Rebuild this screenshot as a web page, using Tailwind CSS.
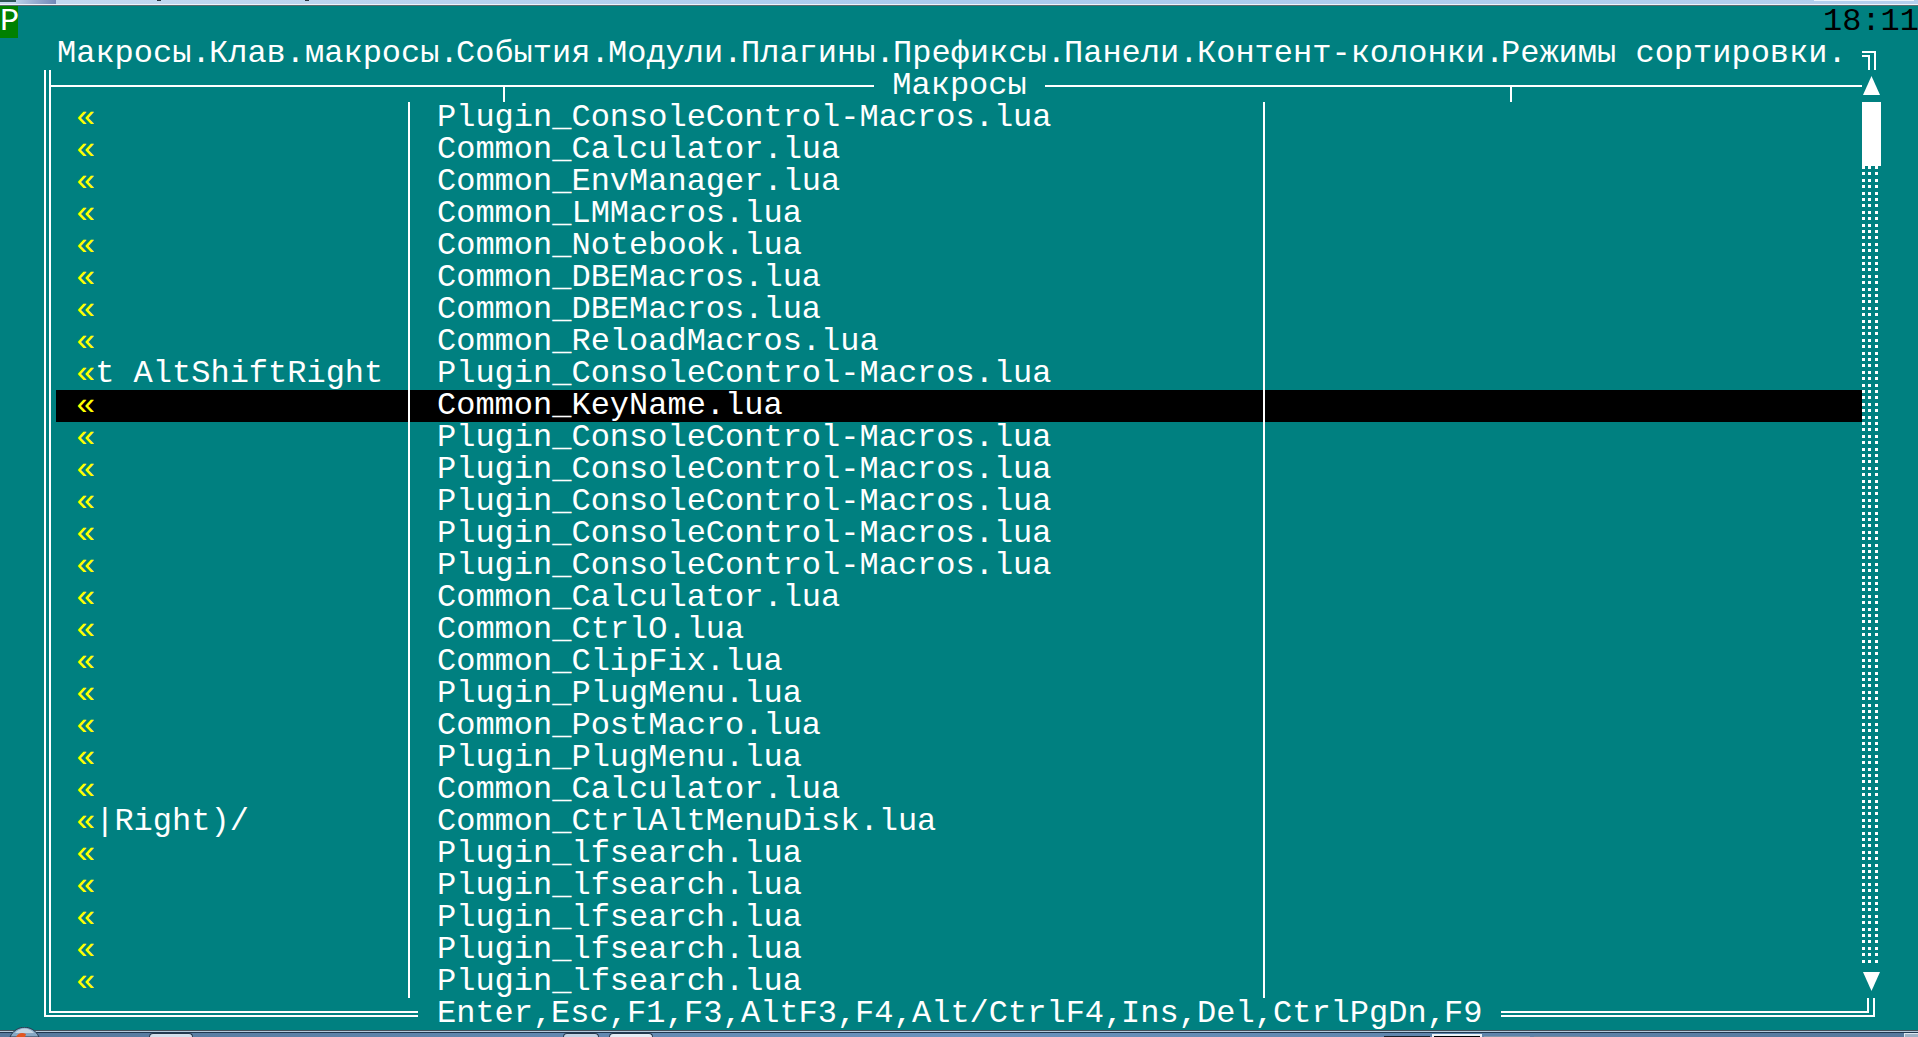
<!DOCTYPE html>
<html lang="ru">
<head>
  <meta charset="UTF-8">
  <meta name="viewport" content="width=device-width, initial-scale=1.0">
  <title>Макросы</title>
  <script src="https://cdn.jsdelivr.net/npm/@tailwindcss/browser@4"></script>
</head>
<body class="h-screen overflow-hidden bg-[#008080] text-white font-['Liberation_Mono',monospace] text-[32px] leading-8 whitespace-nowrap flex flex-col">
  <!-- window edge above the console -->
  <div class="h-[6px] shrink-0 relative bg-linear-to-r from-[#c5daf0] via-[#a9cbee] to-[#b4d0ee] border-b border-[#5c6b6f]">
    <div class="absolute left-0 top-0 w-4 h-[2px] bg-[#2f5558]"></div>
    <div class="absolute left-4 top-0 w-10 h-[4px] bg-linear-to-r from-[#b9d0e8] to-[#7389b8]"></div>
    <div class="absolute left-[157px] top-0 w-1 h-px bg-[#27333d]"></div>
    <div class="absolute left-[305px] top-0 w-1 h-px bg-[#27333d]"></div>
    <div class="absolute right-1 top-0 w-[100px] h-px bg-[#edf4fb]"></div>
    <div class="absolute inset-x-0 bottom-0 h-px bg-[#edf4fb]"></div>
  </div>

  <header class="flex justify-between h-8 shrink-0">
    <span class="w-[18px] bg-[#008000]">P</span>
    <time class="text-black w-[95px]">18:11</time>
  </header>

  <nav class="flex h-8 shrink-0 pl-[57px] pr-[37px]">
    <button class="w-[152px] shrink-0 text-left">Макросы.</button>
    <button class="w-[247px] shrink-0 text-left">Клав.макросы.</button>
    <button class="w-[152px] shrink-0 text-left">События.</button>
    <button class="w-[133px] shrink-0 text-left">Модули.</button>
    <button class="w-[152px] shrink-0 text-left">Плагины.</button>
    <button class="w-[171px] shrink-0 text-left">Префиксы.</button>
    <button class="w-[133px] shrink-0 text-left">Панели.</button>
    <button class="w-[304px] shrink-0 text-left">Контент-колонки.</button>
    <button class="w-[342px] shrink-0 text-left">Режимы сортировки.</button>
    <svg class="ml-auto w-[19px] h-8 shrink-0" viewBox="0 0 19 32" fill="none" stroke="currentColor" stroke-width="2"><path d="M0 14H13V32M0 18H7V32"/></svg>
  </nav>

  <main class="flex flex-1 min-h-0 pl-11 pr-[37px]">
    <div class="w-[7px] border-x-2 shrink-0"></div>
    <section class="flex flex-col flex-1 min-w-0">
      <div class="relative flex items-center h-8 shrink-0">
        <div class="flex-1 h-[2px] bg-white"></div>
        <h1 class="w-[171px] text-center">Макросы</h1>
        <div class="w-[817px] h-[2px] bg-white"></div>
        <div class="absolute left-[452px] top-4 w-[2px] h-4 bg-white"></div>
        <div class="absolute right-[350px] top-4 w-[2px] h-4 bg-white"></div>
      </div>
      <table class="w-full table-fixed border-separate border-spacing-0">
        <colgroup><col class="w-[5px]"><col class="w-[354px]"><col class="w-[855px]"><col></colgroup>
        <tbody id="rows"></tbody>
      </table>
    </section>
    <aside class="w-[19px] flex flex-col shrink-0">
      <button aria-label="Вверх" class="h-8 shrink-0"><svg class="w-[19px] h-8" viewBox="0 0 19 32" fill="currentColor"><path d="M9.500 6L18 25H1Z"/></svg></button>
      <div class="h-16 bg-white shrink-0"></div>
      <svg class="w-[19px] flex-1 min-h-0" fill="currentColor" shape-rendering="crispEdges">
        <defs><pattern id="dots" width="19" height="32" patternUnits="userSpaceOnUse"><path d="M0 0h3v3H0zM6 0h3v3H6zM13 0h3v3H13zM0 6h3v3H0zM6 6h3v3H6zM13 6h3v3H13zM0 13h3v3H0zM6 13h3v3H6zM13 13h3v3H13zM0 19h3v3H0zM6 19h3v3H6zM13 19h3v3H13zM0 26h3v3H0zM6 26h3v3H6zM13 26h3v3H13z"/></pattern></defs>
        <rect width="100%" height="100%" fill="url(#dots)"/>
      </svg>
      <button aria-label="Вниз" class="h-8 shrink-0"><svg class="w-[19px] h-8" viewBox="0 0 19 32" fill="currentColor"><path d="M1 6H18L9.500 25Z"/></svg></button>
    </aside>
  </main>

  <footer class="flex h-8 shrink-0 pl-11 pr-[43px]">
    <div class="w-[374px] h-[19px] border-l-2 border-b-2 pl-[3px] pb-[2px] shrink-0"><div class="h-[15px] border-l-2 border-b-2"></div></div>
    <div class="flex w-[1083px] shrink-0 pl-[19px]">
      <button class="w-[114px] text-left">Enter,</button>
      <button class="w-[76px] text-left">Esc,</button>
      <button class="w-[57px] text-left">F1,</button>
      <button class="w-[57px] text-left">F3,</button>
      <button class="w-[114px] text-left">AltF3,</button>
      <button class="w-[57px] text-left">F4,</button>
      <button class="w-[209px] text-left">Alt/CtrlF4,</button>
      <button class="w-[76px] text-left">Ins,</button>
      <button class="w-[76px] text-left">Del,</button>
      <button class="w-[171px] text-left">CtrlPgDn,</button>
      <button class="w-[38px] text-left">F9</button>
    </div>
    <div class="flex-1 h-[19px] border-r-2 border-b-2 pr-[4px] pb-[2px]"><div class="h-[15px] border-r-2 border-b-2"></div></div>
  </footer>

  <!-- taskbar -->
  <div class="relative h-[7px] shrink-0 border-t border-[#44515c] bg-[#b5cadb] pt-px">
    <div class="h-[5px] border-t border-[#1f3850] bg-linear-to-r from-[#55799c] via-[#6a93bd] to-[#55789b]"></div>
    <svg class="absolute left-2 bottom-0 w-[33px] h-[10px]" viewBox="0 0 33 10">
      <path d="M2 10C8 -3 25 -3 31 10Z" fill="#86a8c4" stroke="#26394c"/>
      <path d="M7 6C12 0 21 0 26 6Z" fill="#c3d5e3"/>
      <path d="M8 10C10 6 14 5 18 7L17 10Z" fill="#e2551f"/>
    </svg>
    <div class="absolute left-[149px] bottom-0 w-[44px] h-1 rounded-t-sm border border-b-0 border-[#26394c] bg-[#d3e0ec]"></div>
    <div class="absolute left-[563px] bottom-0 w-[36px] h-1 rounded-t-sm border border-b-0 border-[#26394c] bg-[#c3d3e3]"></div>
    <div class="absolute left-[609px] bottom-0 w-[44px] h-1 rounded-t-sm border border-b-0 border-[#26394c] bg-[#e4edf5]"></div>
    <div class="absolute right-[488px] bottom-0 w-[46px] h-px bg-[#15202a]"></div>
    <div class="absolute right-[436px] bottom-0 w-[50px] h-[3px] bg-black border-2 border-b-0 border-[#eef3f7]"></div>
    <div class="absolute right-[388px] bottom-0 w-[46px] h-px bg-[#8399ab]"></div>
    <div class="absolute right-[338px] bottom-0 w-[46px] h-px bg-[#7389a0]"></div>
    <div class="absolute right-0 bottom-0 w-[14px] h-[4px] bg-[#9db3c6] border-l border-t border-[#dde7ef]"></div>
  </div>

  <script>
    const files = [
      ['', 'Plugin_ConsoleControl-Macros.lua'],
      ['', 'Common_Calculator.lua'],
      ['', 'Common_EnvManager.lua'],
      ['', 'Common_LMMacros.lua'],
      ['', 'Common_Notebook.lua'],
      ['', 'Common_DBEMacros.lua'],
      ['', 'Common_DBEMacros.lua'],
      ['', 'Common_ReloadMacros.lua'],
      ['t AltShiftRight', 'Plugin_ConsoleControl-Macros.lua'],
      ['', 'Common_KeyName.lua'],
      ['', 'Plugin_ConsoleControl-Macros.lua'],
      ['', 'Plugin_ConsoleControl-Macros.lua'],
      ['', 'Plugin_ConsoleControl-Macros.lua'],
      ['', 'Plugin_ConsoleControl-Macros.lua'],
      ['', 'Plugin_ConsoleControl-Macros.lua'],
      ['', 'Common_Calculator.lua'],
      ['', 'Common_CtrlO.lua'],
      ['', 'Common_ClipFix.lua'],
      ['', 'Plugin_PlugMenu.lua'],
      ['', 'Common_PostMacro.lua'],
      ['', 'Plugin_PlugMenu.lua'],
      ['', 'Common_Calculator.lua'],
      ['|Right)/', 'Common_CtrlAltMenuDisk.lua'],
      ['', 'Plugin_lfsearch.lua'],
      ['', 'Plugin_lfsearch.lua'],
      ['', 'Plugin_lfsearch.lua'],
      ['', 'Plugin_lfsearch.lua'],
      ['', 'Plugin_lfsearch.lua'],
    ];
    const selected = 9;

    document.getElementById('rows').innerHTML = files.map(([key, file], i) => {
      const bg = i === selected ? 'bg-black' : '';
      return `<tr class="h-8"><td class="p-0"></td>
        <td class="p-0 pl-5 border-r-2 ${bg}"><span class="text-[#ffff00]">«</span>${key}</td>
        <td class="p-0 pl-[27px] border-r-2 ${bg}">${file}</td>
        <td class="p-0 ${bg}"></td></tr>`;
    }).join('');
  </script>
</body>
</html>
